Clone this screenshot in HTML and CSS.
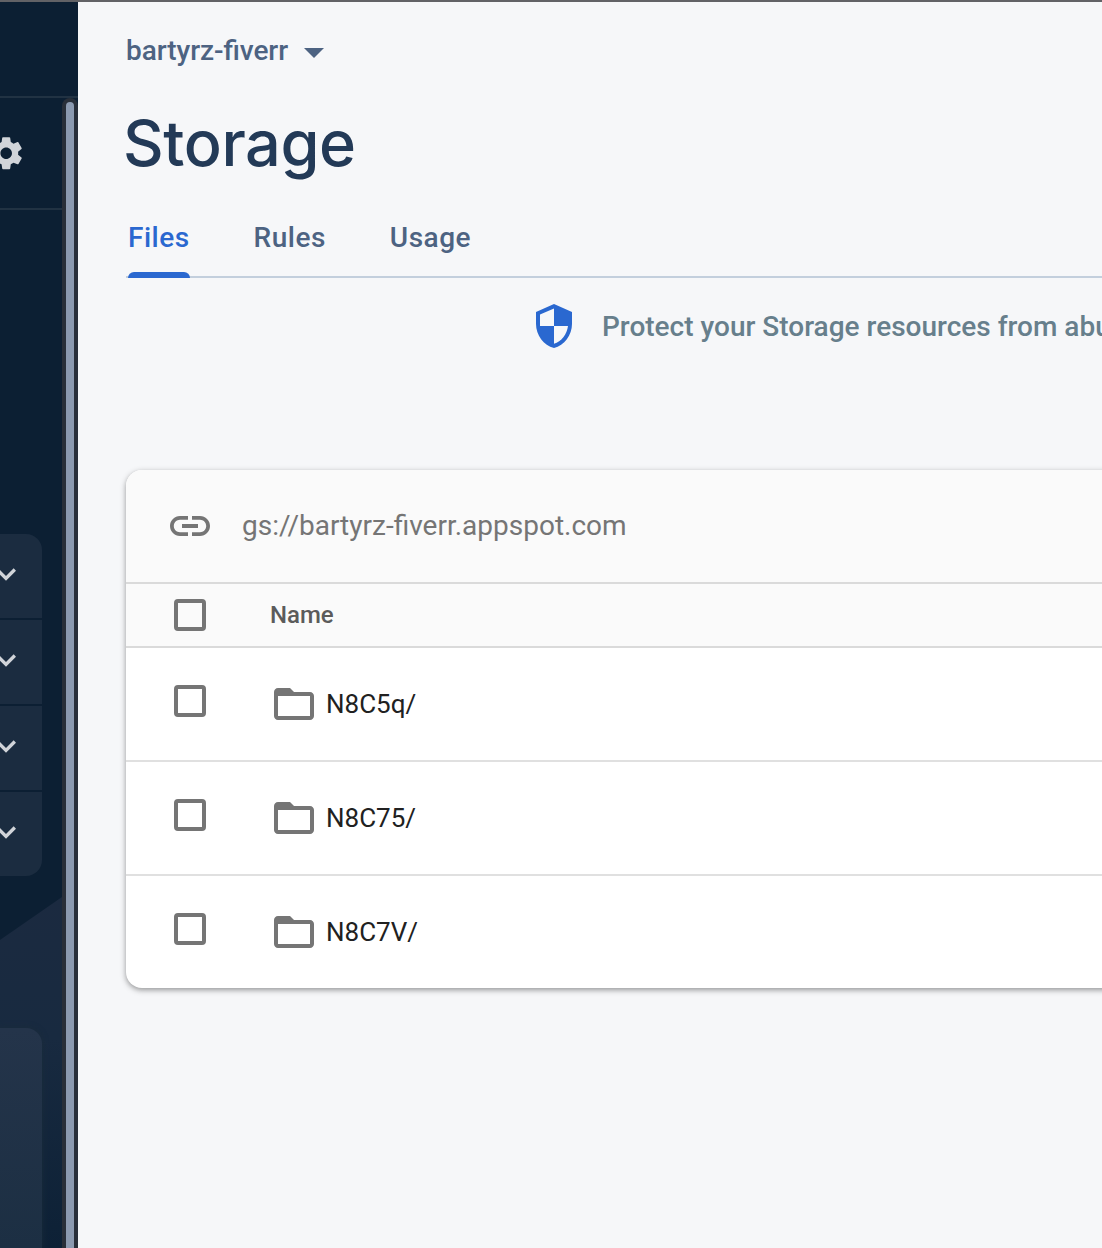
FILE: index.html
```html
<!DOCTYPE html>
<html lang="en">
<head>
<meta charset="utf-8">
<title>Storage</title>
<link rel="stylesheet" href="styles.css">
</head>
<body>
<svg class="defs" width="0" height="0" aria-hidden="true">
  <symbol id="chevron" viewBox="0 0 24 24"><path d="M16.59 8.59L12 13.17 7.41 8.59 6 10l6 6 6-6z"/></symbol>
  <symbol id="folder" viewBox="0 0 24 24"><path d="M20 6h-8l-2-2H4c-1.1 0-2 .9-2 2v12c0 1.1.9 2 2 2h16c1.1 0 2-.9 2-2V8c0-1.1-.9-2-2-2zm0 12H4V8h16v10z"/></symbol>
</svg>
<div class="app">
  <aside class="sidebar">
    <div class="brand"></div>
    <div class="scroller">
      <div class="nav">
        <div class="overview">
          <svg class="gear" viewBox="0 0 24 24"><path d="M19.43 12.98c.04-.32.07-.64.07-.98s-.03-.66-.07-.98l2.11-1.65c.19-.15.24-.42.12-.64l-2-3.46c-.12-.22-.39-.3-.61-.22l-2.49 1c-.52-.4-1.08-.73-1.69-.98l-.38-2.65C14.46 2.18 14.25 2 14 2h-4c-.25 0-.46.18-.49.42l-.38 2.65c-.61.25-1.17.59-1.69.98l-2.49-1c-.23-.09-.49 0-.61.22l-2 3.46c-.13.22-.07.49.12.64l2.11 1.65c-.04.32-.07.65-.07.98s.03.66.07.98l-2.11 1.65c-.19.15-.24.42-.12.64l2 3.46c.12.22.39.3.61.22l2.49-1c.52.4 1.08.73 1.69.98l.38 2.65c.03.24.24.42.49.42h4c.25 0 .46-.18.49-.42l.38-2.65c.61-.25 1.17-.59 1.69-.98l2.49 1c.23.09.49 0 .61-.22l2-3.46c.12-.22.07-.49-.12-.64l-2.11-1.65zM12 15.6c-1.98 0-3.6-1.62-3.6-3.6s1.62-3.6 3.6-3.6 3.6 1.62 3.6 3.6-1.62 3.6-3.6 3.6z"/></svg>
        </div>
        <div class="groups">
          <div class="group"><svg><use href="#chevron"/></svg></div>
          <div class="group"><svg><use href="#chevron"/></svg></div>
          <div class="group"><svg><use href="#chevron"/></svg></div>
          <div class="group"><svg><use href="#chevron"/></svg></div>
        </div>
        <div class="promo"><div class="plan"></div></div>
      </div>
      <div class="track"><div class="thumb"></div></div>
    </div>
  </aside>
  <main class="main">
    <div class="project"><span>bartyrz-fiverr</span><svg viewBox="0 0 24 24"><path d="M7 10l5 5 5-5z"/></svg></div>
    <h1 class="title">Storage</h1>
    <nav class="tabs">
      <a class="tab active">Files</a>
      <a class="tab">Rules</a>
      <a class="tab">Usage</a>
    </nav>
    <div class="notice">
      <svg viewBox="0 0 24 24"><path d="M12 1L3 5v6c0 5.55 3.84 10.74 9 12 5.16-1.26 9-6.45 9-12V5l-9-4zm0 10.99h7c-.53 4.12-3.28 7.79-7 8.94V12H5V6.3l7-3.11v8.8z"/></svg>
      <span>Protect your Storage resources from abu</span>
    </div>
    <section class="card">
      <div class="bucket">
        <svg viewBox="0 0 24 24"><path d="M3.9 12c0-1.71 1.39-3.1 3.1-3.1h4V7H7c-2.76 0-5 2.24-5 5s2.24 5 5 5h4v-1.9H7c-1.71 0-3.1-1.39-3.1-3.1zM8 13h8v-2H8v2zm9-6h-4v1.9h4c1.71 0 3.1 1.39 3.1 3.1s-1.39 3.1-3.1 3.1h-4V17h4c2.76 0 5-2.24 5-5s-2.24-5-5-5z"/></svg>
        <span>gs://bartyrz-fiverr.appspot.com</span>
      </div>
      <div class="row head"><i class="check"></i><span class="name">Name</span></div>
      <div class="row"><i class="check"></i><svg><use href="#folder"/></svg><span class="name">N8C5q/</span></div>
      <div class="row"><i class="check"></i><svg><use href="#folder"/></svg><span class="name">N8C75/</span></div>
      <div class="row"><i class="check"></i><svg><use href="#folder"/></svg><span class="name">N8C7V/</span></div>
    </section>
  </main>
</div>
</body>
</html>
```
FILE: styles.css
```css
* { box-sizing: border-box; }
body {
  margin: 0;
  font-family: Roboto, "Liberation Sans", sans-serif;
  background: #f6f7f9;
}
.defs { display: block; }
svg { flex: none; fill: currentColor; }
.app {
  display: flex;
  height: 1248px;
  border-top: 2px solid #626266;
  overflow: hidden;
}
.sidebar {
  flex: none;
  width: 78px;
  display: flex;
  flex-direction: column;
  background: #0c1f33;
  color: #d1d4d9;
}
.brand { height: 96px; border-bottom: 2px solid #213243; }
.scroller { flex: 1; display: flex; }
.nav { width: 62px; display: flex; flex-direction: column; overflow: hidden; }
.overview {
  height: 112px;
  border-bottom: 2px solid #213243;
  display: flex;
  align-items: center;
  justify-content: flex-end;
  padding-right: 37px;
}
.gear { width: 38.4px; height: 38.4px; }
.groups {
  margin-top: 324px;
  width: 42px;
  display: flex;
  flex-direction: column;
  gap: 2px;
}
.group {
  height: 84px;
  display: flex;
  align-items: center;
  justify-content: flex-end;
  padding: 0 16px 4px 0;
  background: #1b2c40;
}
.group:first-child { border-top-right-radius: 16px; }
.group:last-child { border-bottom-right-radius: 16px; }
.group svg { width: 40px; height: 40px; }
.promo {
  flex: 1;
  margin-top: 21px;
  padding-top: 131px;
  background: linear-gradient(#1b2a40, #182a40 40%, #0d2136);
  clip-path: polygon(0 43px, 62px 0, 62px 100%, 0 100%);
}
.plan {
  width: 42px;
  height: 100%;
  border-top-right-radius: 16px;
  background: linear-gradient(#24344a, #1c2f43);
  box-shadow: 0 0 6px #1b2c3a;
}
.track {
  width: 16px;
  padding: 4px 4px 0;
  border-radius: 8px 8px 0 0;
  background: #292f39;
}
.thumb { height: 100%; border-radius: 4px 4px 0 0; background: #8c9ab0; }
.main {
  flex: 1;
  min-width: 0;
  padding: 26px 0 0 48px;
  overflow: hidden;
}
.project {
  height: 48px;
  display: flex;
  align-items: center;
  gap: 2px;
  color: #4d6382;
  font-size: 28px;
  font-weight: 500;
  line-height: 44px;
  letter-spacing: -0.06px;
  font-feature-settings: "liga" 1;
}
.project span { padding-bottom: 2px; }
.project svg { width: 48px; height: 48px; }
.title {
  margin: 27px 0 0 -3px;
  height: 78px;
  font: 500 63px/80px Inter, sans-serif;
  letter-spacing: -0.4px;
  color: #233a57;
}
.tabs {
  display: flex;
  gap: 64px;
  height: 97px;
  padding-left: 2px;
  border-bottom: 2px solid #c3cfdd;
}
.tab {
  height: 97px;
  padding-top: 38px;
  color: #4d6382;
  font-size: 28px;
  font-weight: 500;
  line-height: 37px;
  letter-spacing: 0.5px;
}
.tab.active {
  display: flex;
  flex-direction: column;
  justify-content: space-between;
  color: #2a68d0;
}
.tab.active::after { content: ""; height: 6px; border-radius: 6px 6px 0 0; background: #2a68d0; }
.notice {
  display: flex;
  align-items: center;
  gap: 24px;
  padding-left: 404px;
  height: 96px;
  color: #677f8c;
  font-size: 28px;
  font-weight: 500;
  white-space: nowrap;
}
.notice svg { width: 48px; height: 48px; color: #2a68d0; }
.card {
  margin-top: 96px;
  width: 1100px;
  border-radius: 16px;
  overflow: hidden;
  background: #fff;
  box-shadow: 0 2px 6px rgba(0, 0, 0, .3), 0 2px 4px rgba(0, 0, 0, .12);
}
.bucket {
  height: 114px;
  padding-left: 40px;
  display: flex;
  align-items: center;
  gap: 28px;
  background: #fafafa;
  border-bottom: 2px solid #dadada;
  color: #757575;
  font-size: 28px;
}
.bucket span { padding-bottom: 2px; }
.bucket svg { width: 48px; height: 48px; }
.row {
  height: 114px;
  display: flex;
  align-items: center;
  padding-left: 48px;
  border-bottom: 2px solid #e0e0e0;
  color: #757575;
}
.row:last-child { height: 112px; border: 0; }
.check {
  width: 32px;
  height: 32px;
  margin: 0 64px 6px 0;
  border: 4px solid #757575;
  border-radius: 4px;
}
.row svg { width: 48px; height: 48px; margin-right: 8px; }
.row .name { color: #212121; font-size: 26px; }
.row.head { height: 64px; background: #fafafa; border-color: #dadada; }
.head .check { margin-bottom: 0; }
.row.head .name { color: #5b5b5b; font-size: 24px; font-weight: 500; }
```
